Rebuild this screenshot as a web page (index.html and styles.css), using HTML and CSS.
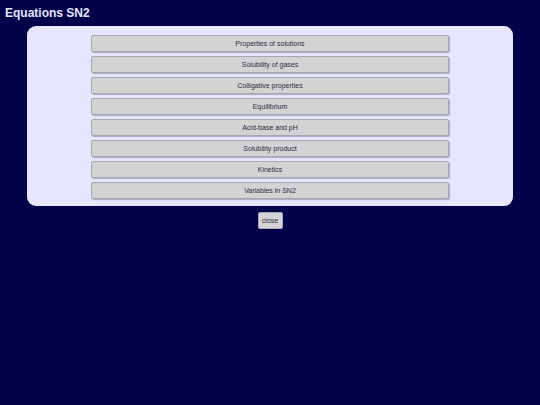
FILE: index.html
```html
<!DOCTYPE html>
<html>
<head>
<meta charset="utf-8">
<link rel="stylesheet" href="styles.css">
</head>
<body>
<h1 class="title">Equations SN2</h1>
<div class="panel">
  <button class="item">Properties of solutions</button>
  <button class="item">Solubility of gases</button>
  <button class="item">Colligative properties</button>
  <button class="item">Equilibrium</button>
  <button class="item">Acid-base and pH</button>
  <button class="item">Solubility product</button>
  <button class="item">Kinetics</button>
  <button class="item">Variables in SN2</button>
</div>
<div class="footer">
  <button class="close">close</button>
</div>
</body>
</html>
```
FILE: styles.css
```css
html, body {
  margin: 0;
  padding: 0;
  background: #02024a;
  font-family: "Liberation Sans", Arial, sans-serif;
}
.title {
  margin: 0;
  padding: 6px 0 0 5px;
  height: 20px;
  box-sizing: border-box;
  font-size: 12px;
  font-weight: bold;
  color: #e6e6ff;
  line-height: 14px;
}
.panel {
  margin: 6px 27px 0;
  background: #e6e6fe;
  border-radius: 9px;
  padding: 9px 64px 7px;
  display: flex;
  flex-direction: column;
  gap: 4px;
}
.item {
  display: block;
  width: 100%;
  height: 17px;
  margin: 0;
  padding: 0;
  background: #d3d3d3;
  border: 1px solid #a7a7b3;
  border-radius: 2px;
  box-shadow: 1px 1px 1px rgba(0,0,0,0.25);
  font-family: "Liberation Sans", Arial, sans-serif;
  font-size: 7px;
  color: #2a2a48;
}
.footer {
  display: flex;
  justify-content: center;
  padding-top: 6px;
}
.close {
  width: 25px;
  height: 17px;
  margin: 0;
  padding: 0;
  background: #d3d3d3;
  border: 1px solid #a7a7b3;
  border-radius: 2px;
  font-family: "Liberation Sans", Arial, sans-serif;
  font-size: 7px;
  color: #2a2a48;
}
```
